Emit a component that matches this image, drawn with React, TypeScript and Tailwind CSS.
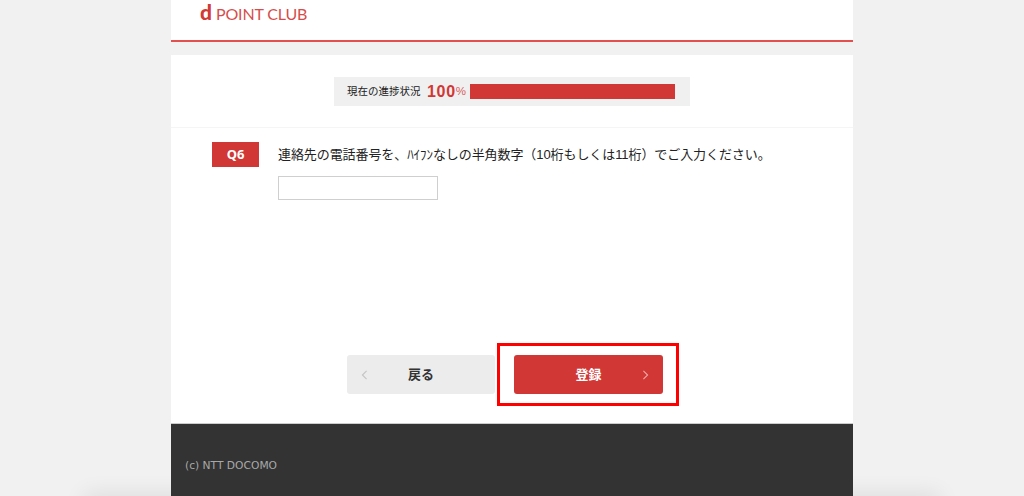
const jp = "font-['Liberation_Sans','Noto_Sans_CJK_JP',sans-serif]";

function Chevron({ dir, className }: { dir: "left" | "right"; className: string }) {
	return (
		<svg viewBox="0 0 8 12" fill="none" stroke="currentColor" strokeWidth={1.3} className={className}>
			<path d={dir === "left" ? "M6.5 1 L1.5 6 L6.5 11" : "M1.5 1 L6.5 6 L1.5 11"} />
		</svg>
	);
}

export default function App() {
	return (
		<div className={`h-[496px] overflow-hidden bg-[#f1f1f1] ${jp} relative`}>
			{/* soft shadow at the bottom of the page */}
			<div className="absolute left-[90px] right-[90px] top-[500px] h-[10px] shadow-[0_0_22px_6px_rgba(0,0,0,0.09)]" />

			<div className="relative ml-[171px] w-[682px]">
				<header className="h-[42px] bg-white border-b-2 border-[#e2514f] pl-[29px] pt-[1px]">
					<div className="flex items-baseline text-[#d13a37] font-['Lato',sans-serif] leading-[22px]">
						<span className="text-[21px] font-black mr-[4px]">d</span>
						<span className="text-[16px] tracking-[-0.15px] opacity-90">POINT CLUB</span>
					</div>
				</header>

				<main className="mt-[13px] h-[368px] bg-white flex flex-col">
					<div className="h-[73px] border-b border-[#f5f5f5] pt-[22px] pl-[163px]">
						<div className="w-[356px] h-[29px] bg-[#f0f0f0] flex items-center pl-[13px]">
							<span className="text-[10.5px] text-[#222] w-[79px] whitespace-nowrap">現在の進捗状況</span>
							<span className="text-[16px] font-bold text-[#d13735] ml-[1px] tracking-[0.7px]">100</span>
							<span className="text-[11.5px] text-[#d9605e] mr-[4px]">%</span>
							<div className="w-[205px] h-[15px] bg-[#d13735]" />
						</div>
					</div>

					<div className="flex pl-[41px] pt-[14px]">
						<div className="w-[47px] h-[25px] bg-[#d13735] text-white text-[13px] font-bold font-['Noto_Sans',sans-serif] flex items-center justify-center">
							Q6
						</div>
						<div className="ml-[19px]">
							<p className="text-[13px] leading-[25px] tracking-[-0.08px] text-[#222] whitespace-nowrap">
								連絡先の電話番号を、ﾊｲﾌﾝなしの半角数字（10桁もしくは11桁）でご入力ください。
							</p>
							<input
								type="text"
								aria-label="電話番号"
								className="block mt-[9px] w-[160px] h-[24px] bg-white border border-[#cfcfcf]"
							/>
						</div>
					</div>

					<div className="flex pl-[176px] mt-[143px]">
						<button className="mt-[12px] w-[148px] h-[39px] rounded-[3px] bg-[#ececec] text-[#333] text-[13px] font-bold relative flex items-center justify-center">
							<Chevron dir="left" className="absolute left-[14px] top-[15px] w-[7px] h-[10px] text-[#c4c4c4]" />
							<span>戻る</span>
						</button>
						<div className="ml-[2px] w-[182px] h-[63px] border-[3px] border-[#ff0000] pl-[14px] pt-[9px]">
							<button className="w-[149px] h-[39px] rounded-[3px] bg-[#d13735] text-white text-[13px] font-bold relative flex items-center justify-center">
								<span>登録</span>
								<Chevron dir="right" className="absolute right-[14px] top-[15px] w-[7px] h-[10px] text-[#eba9a7]" />
							</button>
						</div>
					</div>
				</main>

				<footer className="h-[73px] bg-[#333333] border-t border-[#cccccc] pl-[14px] pt-[35px]">
					<p className="text-[10.7px] leading-[14px] text-[#a8a8a8] font-['DejaVu_Sans',sans-serif]">(c) NTT DOCOMO</p>
				</footer>
			</div>
		</div>
	);
}
